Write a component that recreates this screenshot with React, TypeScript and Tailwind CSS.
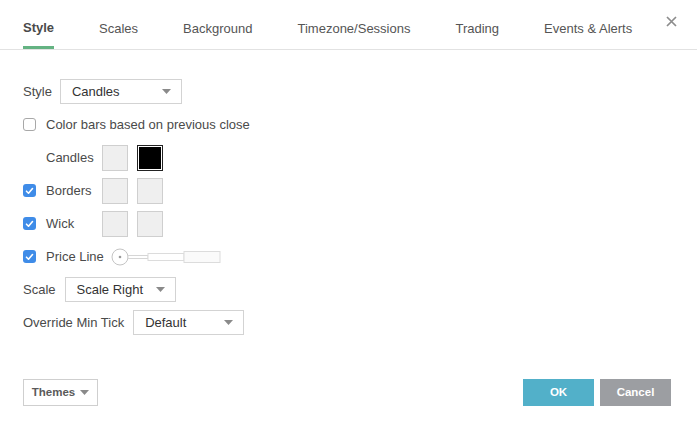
import { useState } from "react";

const tabs = ["Style", "Scales", "Background", "Timezone/Sessions", "Trading", "Events & Alerts"];

function Caret({ className = "" }: { className?: string }) {
  return (
    <svg width="9" height="5" viewBox="0 0 9 5" className={className}>
      <path d="M0 0h9L4.5 5z" fill="#8a8a8a" />
    </svg>
  );
}

function Select({ value, width }: { value: string; width: string }) {
  return (
    <div className={`${width} h-[25px] flex items-center justify-between pl-[11px] pr-[10px] border border-[#d3d3d3] bg-white text-[13px] text-[#333]`}>
      <span>{value}</span>
      <Caret />
    </div>
  );
}

function Checkbox({ checked }: { checked: boolean }) {
  if (!checked)
    return <div className="w-[13px] h-[13px] rounded-[3px] border border-[#a8a8a8] bg-white" />;
  return (
    <div className="w-[13px] h-[13px] rounded-[3px] bg-[#3f8ce8] flex items-center justify-center">
      <svg width="9" height="8" viewBox="0 0 9 8">
        <path d="M1.5 4.2l2 2L7.5 1.5" stroke="white" strokeWidth="1.6" fill="none" strokeLinecap="round" strokeLinejoin="round" />
      </svg>
    </div>
  );
}

function Swatch({ dark }: { dark?: boolean }) {
  if (dark)
    return (
      <div className="w-[26px] h-[26px] border border-[#222] p-px bg-white">
        <div className="w-full h-full bg-black" />
      </div>
    );
  return <div className="w-[26px] h-[26px] border border-[#cfcfcf] bg-[#efefef]" />;
}

function ColorRow({ label, checked }: { label: string; checked?: boolean }) {
  return (
    <div className="h-[33px] flex items-center">
      <div className="w-[23px]">{checked !== undefined && <Checkbox checked={checked} />}</div>
      <span className="w-[56px]">{label}</span>
      <div className="flex gap-[9px]">
        <Swatch />
        <Swatch dark={label === "Candles"} />
      </div>
    </div>
  );
}

function LineWidth() {
  return (
    <svg width="110" height="20" viewBox="0 0 110 20" className="ml-[7px]">
      <circle cx="9" cy="10" r="8" fill="white" stroke="#c4c4c4" />
      <circle cx="9" cy="10" r="1.3" fill="#9a9a9a" />
      <rect x="17" y="8.5" width="20" height="3" fill="white" stroke="#d6d6d6" />
      <rect x="37" y="6.5" width="36" height="7" fill="white" stroke="#dcdcdc" />
      <rect x="73" y="4.5" width="36" height="11" fill="#fafafa" stroke="#dcdcdc" />
    </svg>
  );
}

export default function App() {
  const [active, setActive] = useState(0);

  return (
    <div className="w-[697px] h-[431px] bg-white text-[13px] text-[#4a4a4a] flex flex-col" style={{ fontFamily: '"Liberation Sans", Arial, sans-serif' }}>
      <div className="relative h-[50px] border-b border-[#e2e2e2] flex pl-[23px] gap-[45px]">
        {tabs.map((t, i) => (
          <button
            key={t}
            onClick={() => setActive(i)}
            className={`relative h-full pt-[9px] text-[13px] whitespace-nowrap ${i === active ? "font-bold text-[#4a4a4a] border-b-[3px] border-[#64b382] -mb-px" : "text-[#555]"}`}
          >
            {t}
          </button>
        ))}
        <button className="absolute right-[20px] top-[16px] text-[#8a8a8a]">
          <svg width="11" height="11" viewBox="0 0 11 11">
            <path d="M1 1l9 9M10 1l-9 9" stroke="#8c8c8c" strokeWidth="1.7" />
          </svg>
        </button>
      </div>

      <div className="pl-[23px] pt-[25px] flex flex-col">
        <div className="h-[33px] flex items-center gap-[8px]">
          <span>Style</span>
          <Select value="Candles" width="w-[122px]" />
        </div>
        <div className="h-[33px] flex items-center gap-[10px]">
          <Checkbox checked={false} />
          <span>Color bars based on previous close</span>
        </div>
        <ColorRow label="Candles" />
        <ColorRow label="Borders" checked />
        <ColorRow label="Wick" checked />
        <div className="h-[33px] flex items-center">
          <div className="w-[23px]"><Checkbox checked /></div>
          <span>Price Line</span>
          <LineWidth />
        </div>
        <div className="h-[33px] flex items-center gap-[9px]">
          <span>Scale</span>
          <Select value="Scale Right" width="w-[111px]" />
        </div>
        <div className="h-[33px] flex items-center gap-[9px]">
          <span>Override Min Tick</span>
          <Select value="Default" width="w-[111px]" />
        </div>
      </div>

      <div className="mt-auto mb-[25px] px-[23px] pr-[26px] flex items-center justify-between">
        <button className="w-[75px] h-[27px] border border-[#cfcfcf] flex items-center justify-center gap-[5px] text-[11.5px] font-bold text-[#5a5a5a]">
          Themes
          <Caret />
        </button>
        <div className="flex gap-[6px]">
          <button className="w-[71px] h-[27px] bg-[#52b0c9] text-white text-[11.5px] font-bold">OK</button>
          <button className="w-[71px] h-[27px] bg-[#9c9ea2] text-white text-[11.5px] font-bold">Cancel</button>
        </div>
      </div>
    </div>
  );
}
